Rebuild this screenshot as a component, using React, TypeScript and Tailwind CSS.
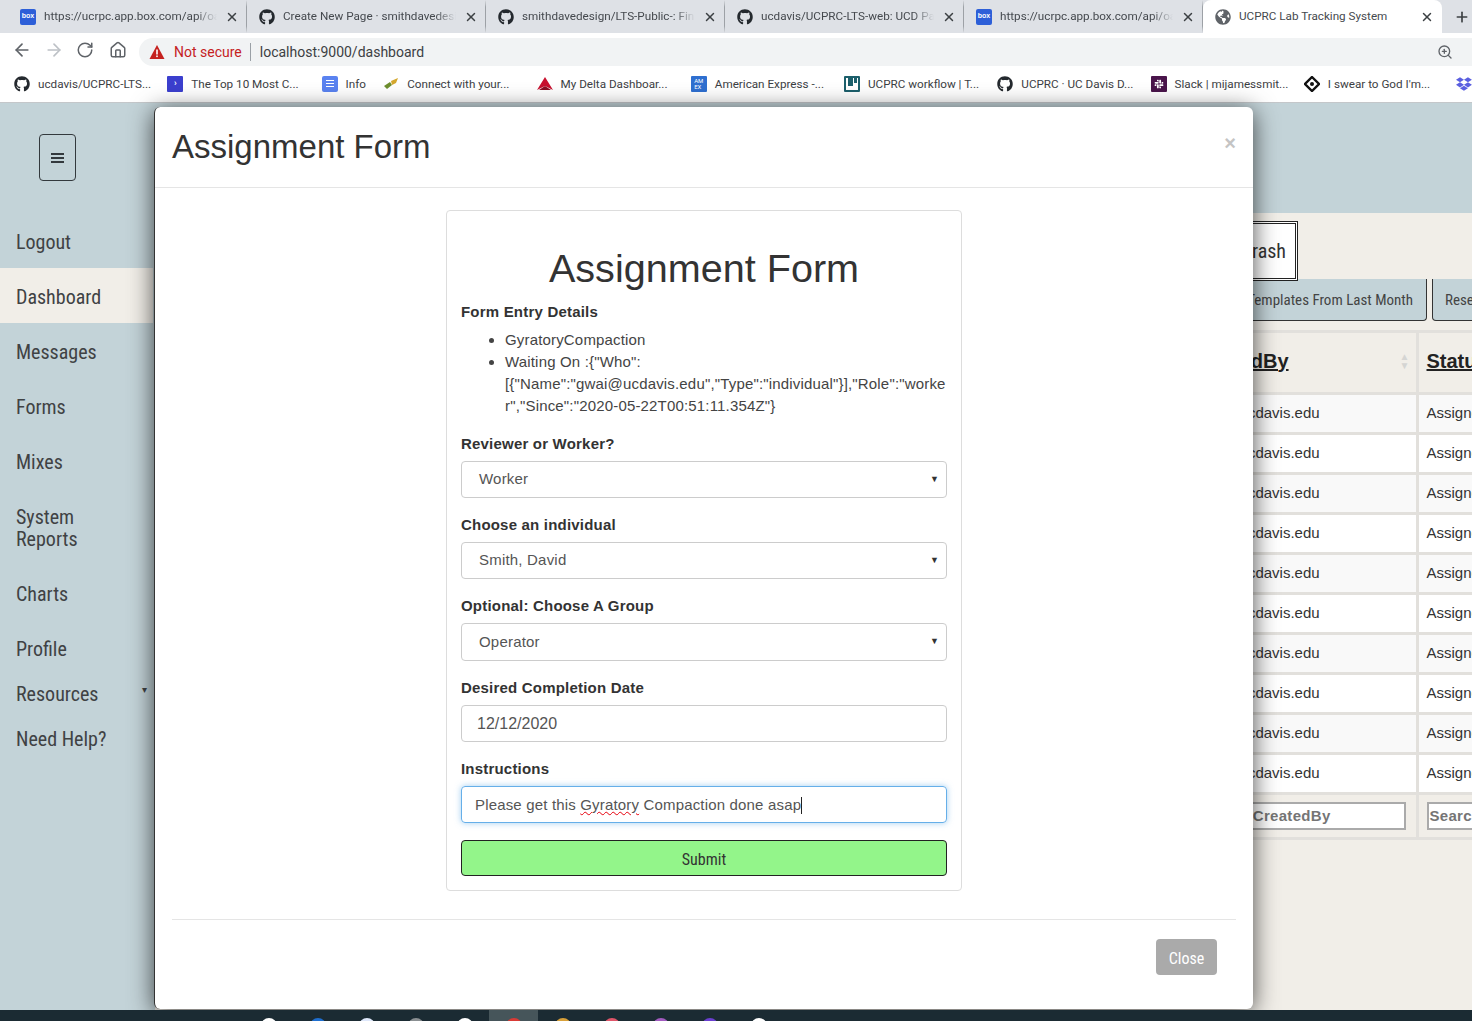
import { ArrowLeft, ArrowRight, RotateCw, Home, ZoomIn, X, Plus } from 'lucide-react'
import { FaGithub, FaGlobeAmericas, FaSlack, FaDropbox } from 'react-icons/fa'

const ui = "font-['Roboto',sans-serif]"
const narrow = "font-['Liberation_Sans_Narrow','Roboto_Condensed','Liberation_Sans',sans-serif]"

function BoxIcon() {
  return (
    <span className="flex h-4 w-4 shrink-0 items-center justify-center rounded-[2px] bg-[#2d5fd8] font-['Liberation_Sans',sans-serif] text-[7px] font-bold text-white">
      box
    </span>
  )
}

const GithubIcon = () => <FaGithub className="h-4 w-4 shrink-0 text-[#24292e]" />

const tabs = [
  { title: 'https://ucrpc.app.box.com/api/oauth2/authorize', icon: <BoxIcon /> },
  { title: 'Create New Page · smithdavedesign/LTS', icon: <GithubIcon /> },
  { title: 'smithdavedesign/LTS-Public-: Final', icon: <GithubIcon /> },
  { title: 'ucdavis/UCPRC-LTS-web: UCD Pavement', icon: <GithubIcon /> },
  { title: 'https://ucrpc.app.box.com/api/oauth2/authorize', icon: <BoxIcon /> },
]

function TabStrip() {
  return (
    <div className={`flex h-[33px] items-end bg-[#dee1e6] pl-2 text-[11.7px] text-[#45494e] ${ui}`}>
      {tabs.map((t, i) => (
        <div key={i} className="flex h-[33px] w-[239px] items-center border-r border-[#9da1a6] border-y-[7px] border-y-[#dee1e6] pl-3 pr-[7px]">
          {t.icon}
          <span className="ml-2 flex-1 overflow-hidden whitespace-nowrap pt-px [mask-image:linear-gradient(to_right,black_88%,transparent)]">{t.title}</span>
          <X className="ml-2 h-[14px] w-[14px] shrink-0 text-[#3c4043]" strokeWidth={2.5} />
        </div>
      ))}
      <div className="flex h-[33px] w-[239px] items-center rounded-t-lg bg-white pl-3 pr-[8px]">
        <FaGlobeAmericas className="h-4 w-4 shrink-0 text-[#5f6368]" />
        <span className="ml-2 flex-1 whitespace-nowrap pt-px">UCPRC Lab Tracking System</span>
        <X className="h-[14px] w-[14px] shrink-0 text-[#3c4043]" strokeWidth={2.5} />
      </div>
      <div className="flex h-[33px] flex-1 items-center pl-3">
        <Plus className="h-4 w-4 text-[#3c4043]" strokeWidth={2.5} />
      </div>
    </div>
  )
}

function Toolbar() {
  return (
    <div className={`flex h-[33px] items-center bg-white pl-3 ${ui}`}>
      <ArrowLeft className="h-5 w-5 text-[#5f6368]" />
      <ArrowRight className="ml-3 h-5 w-5 text-[#bdc1c6]" />
      <RotateCw className="ml-3 h-[18px] w-[18px] text-[#5f6368]" />
      <Home className="ml-[15px] h-[18px] w-[18px] text-[#5f6368]" />
      <div className="ml-[12px] mt-[5px] flex h-[28px] flex-1 items-center rounded-l-[14px] bg-[#f1f3f4] pl-[10px] text-sm">
        <svg viewBox="0 0 16 16" className="h-4 w-4 shrink-0">
          <path d="M8 1 L15.5 15 H0.5 Z" fill="#c5221f" />
          <rect x="7.2" y="5.5" width="1.6" height="5" fill="#fff" />
          <rect x="7.2" y="11.5" width="1.6" height="1.6" fill="#fff" />
        </svg>
        <span className="ml-[9px] text-[#c5221f]">Not secure</span>
        <span className="ml-2 h-[18px] w-px bg-[#9aa0a6]" />
        <span className="ml-[9px] flex-1 text-[#3c4043]">localhost:9000/dashboard</span>
        <ZoomIn className="mr-[19px] h-4 w-4 text-[#5f6368]" />
      </div>
    </div>
  )
}

const Square = ({ className, children }: { className: string; children?: React.ReactNode }) => (
  <span className={`flex h-4 w-4 shrink-0 items-center justify-center rounded-[1px] text-white ${className}`}>{children}</span>
)

const bookmarks = [
  { w: 'w-[154px]', label: 'ucdavis/UCPRC-LTS...', icon: <GithubIcon /> },
  { w: 'w-[155px]', label: 'The Top 10 Most C...', icon: <Square className="bg-[#3b3fce] text-[9px] font-bold">›</Square> },
  { w: 'w-[62px]', label: 'Info', icon: (
    <Square className="flex-col gap-[2px] rounded-[2px] bg-[#5a82f0]">
      <span className="h-px w-2 bg-white" />
      <span className="h-px w-2 bg-white" />
      <span className="h-px w-2 bg-white" />
    </Square>
  ) },
  { w: 'w-[154px]', label: 'Connect with your...', icon: (
    <svg viewBox="0 0 16 16" className="h-4 w-4 shrink-0">
      <path d="M1 10 L7 6 L9 9 L4 13 Z" fill="#6d8f2e" />
      <path d="M8 5 L15 2 L13 7 L9 9 Z" fill="#d4a72c" />
    </svg>
  ) },
  { w: 'w-[155px]', label: 'My Delta Dashboar...', icon: (
    <svg viewBox="0 0 16 16" className="h-4 w-4 shrink-0">
      <path d="M8 1 L16 14 L8 10 L0 14 Z" fill="#c8102e" />
      <path d="M8 10 L14 14 H2 Z" fill="#8c0d22" />
    </svg>
  ) },
  { w: 'w-[154px]', label: 'American Express -...', icon: <Square className="bg-[#2e6fd0] text-[6px] leading-[6px]">AM<br />EX</Square> },
  { w: 'w-[154px]', label: 'UCPRC workflow | T...', icon: (
    <Square className="items-start gap-px border-2 border-[#1c5f6b] bg-white">
      <span className="h-2 w-[5px] bg-[#1c5f6b]" />
      <span className="h-[5px] w-[3px] bg-[#1c5f6b]" />
    </Square>
  ) },
  { w: 'w-[154px]', label: 'UCPRC · UC Davis D...', icon: <GithubIcon /> },
  { w: 'w-[154px]', label: 'Slack | mijamessmit...', icon: <Square className="bg-[#4a154b] text-[10px]"><FaSlack /></Square> },
  { w: 'w-[153px]', label: "I swear to God I'm...", icon: (
    <svg viewBox="0 0 16 16" className="h-4 w-4 shrink-0">
      <path d="M8 1 L15 8 L8 15 L1 8 Z" fill="none" stroke="#111" strokeWidth="2.4" />
      <circle cx="8" cy="8" r="2" fill="#111" />
    </svg>
  ) },
]

function BookmarkBar() {
  return (
    <div className={`flex h-[37px] items-center border-b border-[#c4c7ca] bg-white pl-[14px] text-[11.7px] text-[#3c4043] ${ui}`}>
      {bookmarks.map((b) => (
        <div key={b.label} className={`flex items-center gap-2 whitespace-nowrap ${b.w}`}>
          {b.icon}
          <span className="pt-px">{b.label}</span>
        </div>
      ))}
      <FaDropbox className="h-4 w-4 text-[#5a5fe0]" />
    </div>
  )
}

const navItems = [
  { label: 'Logout', h: 'h-[55px]' },
  { label: 'Dashboard', h: 'h-[55px]', active: true },
  { label: 'Messages', h: 'h-[55px]' },
  { label: 'Forms', h: 'h-[55px]' },
  { label: 'Mixes', h: 'h-[55px]' },
  { label: 'System Reports', h: 'h-[77px]' },
  { label: 'Charts', h: 'h-[55px]' },
  { label: 'Profile', h: 'h-[55px]' },
  { label: 'Resources', h: 'h-[35px]', caret: true },
  { label: 'Need Help?', h: 'h-[55px]' },
]

function Sidebar() {
  return (
    <aside className={`w-[155px] shrink-0 bg-[#c3d3d8] text-xl leading-[22px] text-[#3f4244] ${narrow}`}>
      <div className="h-[110px] pl-[39px] pt-[31px]">
        <div className="flex h-[47px] w-[37px] flex-col items-center justify-center gap-[2px] rounded border border-[#33393d]">
          <span className="h-[2px] w-[13px] bg-[#33393d]" />
          <span className="h-[2px] w-[13px] bg-[#33393d]" />
          <span className="h-[2px] w-[13px] bg-[#33393d]" />
        </div>
      </div>
      {navItems.map((n) => (
        <div key={n.label} className={`flex w-[153px] items-center pl-4 pt-[2px] ${n.h} ${n.active ? 'bg-[#f1eee8]' : ''}`}>
          <span className={n.label === 'System Reports' ? 'w-[80px]' : ''}>{n.label}</span>
          {n.caret && <span className="ml-auto mr-[6px] -mt-2 text-[10px]">▾</span>}
        </div>
      ))}
    </aside>
  )
}

const rowKeys = [0, 1, 2, 3, 4, 5, 6, 7, 8, 9]

function Main() {
  return (
    <main className="min-w-0 flex-1 overflow-hidden bg-[#f1eee8]">
      <div className="h-[110px] bg-[#c3d3d8]" />
      <div className={`relative ml-[1000px] mt-2 flex h-[60px] w-[143px] items-center justify-end border border-[#222] bg-white pr-[11px] text-xl text-[#333] outline outline-1 outline-offset-[-3px] outline-[#222] ${narrow}`}>
        Trash
      </div>
      <div className={`-mt-[2px] ml-[800px] flex w-[600px] gap-[5px] text-[15px] text-[#444] ${narrow}`}>
        <div className="flex h-[42px] w-[472px] shrink-0 items-center justify-end rounded-b border border-t-0 border-[#333] bg-[#c3d3d8] pr-[13px] pt-[2px]">
          Create Templates From Last Month
        </div>
        <div className="flex h-[42px] w-[120px] shrink-0 items-center rounded-b border border-t-0 border-[#333] bg-[#c3d3d8] pl-[12px] pt-[2px]">
          Reset
        </div>
      </div>
      <table className="mt-[9px] w-[1500px] table-fixed border-collapse font-['Liberation_Sans',sans-serif] text-[15px] text-[#333]">
        <colgroup>
          <col className="w-[1027px]" />
          <col className="w-[235px]" />
          <col />
        </colgroup>
        <thead>
          <tr className="h-[62px] border-y-[3px] border-[#e2e0dc] text-left text-xl text-[#222]">
            <th />
            <th className="relative border-x-[3px] border-[#e2e0dc] pb-[4px] pl-[5px]">
              <span className="underline">CreatedBy</span>
              <span className="absolute right-[6px] top-[19px] text-[10px] leading-[9px] text-[#d5d5d3]">▲<br />▼</span>
            </th>
            <th className="pb-[4px] pl-[8px]"><span className="underline">Status</span></th>
          </tr>
        </thead>
        <tbody>
          {rowKeys.map((i) => (
            <tr key={i} className={`h-[40px] border-b-[3px] border-[#e2e0dc] ${i % 2 === 0 ? 'bg-[#f9f9f9]' : 'bg-white'}`}>
              <td />
              <td className="border-x-[3px] border-[#e2e0dc] pl-[10px]">gwai@ucdavis.edu</td>
              <td className="pl-[8px]">Assigned</td>
            </tr>
          ))}
          <tr className="h-[45px] border-b-[3px] border-[#e2e0dc]">
            <td />
            <td className="border-x-[3px] border-[#e2e0dc] pl-[10px]">
              <div className="flex h-[28px] w-[212px] items-center overflow-hidden whitespace-nowrap border-2 border-[#aaa] bg-white pl-[1px] text-[15px] font-bold tracking-[0.3px] text-[#757575]">Search CreatedBy</div>
            </td>
            <td className="pl-[8px]">
              <div className="flex h-[28px] w-[214px] items-center overflow-hidden whitespace-nowrap border-2 border-[#aaa] bg-white pl-[1px] text-[15px] font-bold tracking-[0.3px] text-[#757575]">Search Status</div>
            </td>
          </tr>
        </tbody>
      </table>
    </main>
  )
}

function Field({ label, children }: { label: string; children: React.ReactNode }) {
  return (
    <div>
      <div className="text-[15px] font-bold leading-5 tracking-[0.2px] text-[#333]">{label}</div>
      <div className="mt-[7px]">{children}</div>
    </div>
  )
}

function SelectBox({ value, tall }: { value: string; tall?: boolean }) {
  return (
    <div className={`flex items-center rounded border border-[#ccc] pl-[17px] pr-[7px] text-[15px] tracking-[0.2px] text-[#555] ${tall ? 'h-[38px]' : 'h-[37px]'}`}>
      <span className="flex-1">{value}</span>
      <span className="text-[9px] text-[#333]">▼</span>
    </div>
  )
}

function AssignmentModal() {
  return (
    <div className="absolute bottom-[12px] left-[154px] top-[107px] flex w-[1099px] flex-col rounded-md border-l border-[#333] bg-white font-['Liberation_Sans',sans-serif] text-[#333] shadow-[0_4px_24px_rgba(0,0,0,0.7)]">
      <div className="flex h-[81px] items-center justify-between border-b border-[#e5e5e5] pl-[17px] pr-[17px]">
        <h4 className="text-[33px] leading-10">Assignment Form</h4>
        <span className="-mt-2 text-xl font-bold text-[#c4c4c4]">×</span>
      </div>
      <div className="ml-[291px] mt-[22px] w-[516px] rounded border border-[#ddd] px-[14px] pb-[14px] pt-[32px]">
        <h1 className="text-center text-[39.6px] leading-[50px]">Assignment Form</h1>
        <div className="mt-[9px] text-[15px] font-bold leading-5 tracking-[0.2px]">Form Entry Details</div>
        <ul className="mt-[7px] list-disc break-words pl-[44px] text-[15px] leading-[22px] tracking-[0.17px] text-[#444]">
          <li>GyratoryCompaction</li>
          <li>Waiting On :{'{'}"Who":[{'{'}"Name":"gwai@ucdavis.edu","Type":"individual"{'}'}],"Role":"worker","Since":"2020-05-22T00:51:11.354Z"{'}'}</li>
        </ul>
        <div className="mt-[17px] flex flex-col gap-[17px]">
          <Field label="Reviewer or Worker?"><SelectBox value="Worker" /></Field>
          <Field label="Choose an individual"><SelectBox value="Smith, David" /></Field>
          <Field label="Optional: Choose A Group"><SelectBox value="Operator" tall /></Field>
          <Field label="Desired Completion Date">
            <div className="flex h-[37px] items-center rounded border border-[#ccc] pl-[15px] text-base text-[#555]">12/12/2020</div>
          </Field>
          <Field label="Instructions">
            <div className="flex h-[37px] items-center rounded border border-[#66afe9] pl-[13px] pt-px text-[15px] tracking-[0.17px] text-[#555] shadow-[0_0_6px_rgba(102,175,233,0.6)]">
              Please get this&nbsp;<span className="underline decoration-red-600 decoration-wavy decoration-1">Gyratory</span>&nbsp;Compaction done asap<span className="h-[17px] w-px bg-[#222]" />
            </div>
          </Field>
          <button className={`h-[36px] rounded border border-[#222] bg-[#93f58a] pt-[4px] text-base text-[#333] ${narrow}`}>Submit</button>
        </div>
      </div>
      <div className="mx-[17px] mt-[28px] border-t border-[#e5e5e5]" />
      <div className="mr-[36px] mt-[19px] flex justify-end">
        <button className={`h-[36px] w-[61px] rounded bg-[#aaa] pt-[4px] text-base text-white ${narrow}`}>Close</button>
      </div>
    </div>
  )
}

const taskIcons = [
  'bg-white', 'bg-[#1f6fd0]', 'bg-[#dfe8fb]', 'bg-[#8a8f92]', 'bg-white', 'bg-[#d93a35]',
  'bg-[#d9a13a]', 'bg-[#e0566a]', 'bg-[#a25bc0]', 'bg-[#6a3fd0]', 'bg-white',
]

function Taskbar() {
  return (
    <div className="relative z-10 flex h-[11px] shrink-0 overflow-hidden bg-[#1b2b33] pl-[244px]">
      {taskIcons.map((c, i) => (
        <div key={i} className={`flex w-[49px] justify-center pt-[8px] ${i === 5 ? 'bg-[#46555a]' : ''}`}>
          <span className={`h-4 w-4 rounded-full ${c}`} />
        </div>
      ))}
    </div>
  )
}

export default function App() {
  return (
    <div className="relative flex h-[1021px] w-[1472px] flex-col overflow-hidden">
      <TabStrip />
      <Toolbar />
      <BookmarkBar />
      <div className="flex min-h-0 flex-1">
        <Sidebar />
        <Main />
      </div>
      <Taskbar />
      <AssignmentModal />
    </div>
  )
}
